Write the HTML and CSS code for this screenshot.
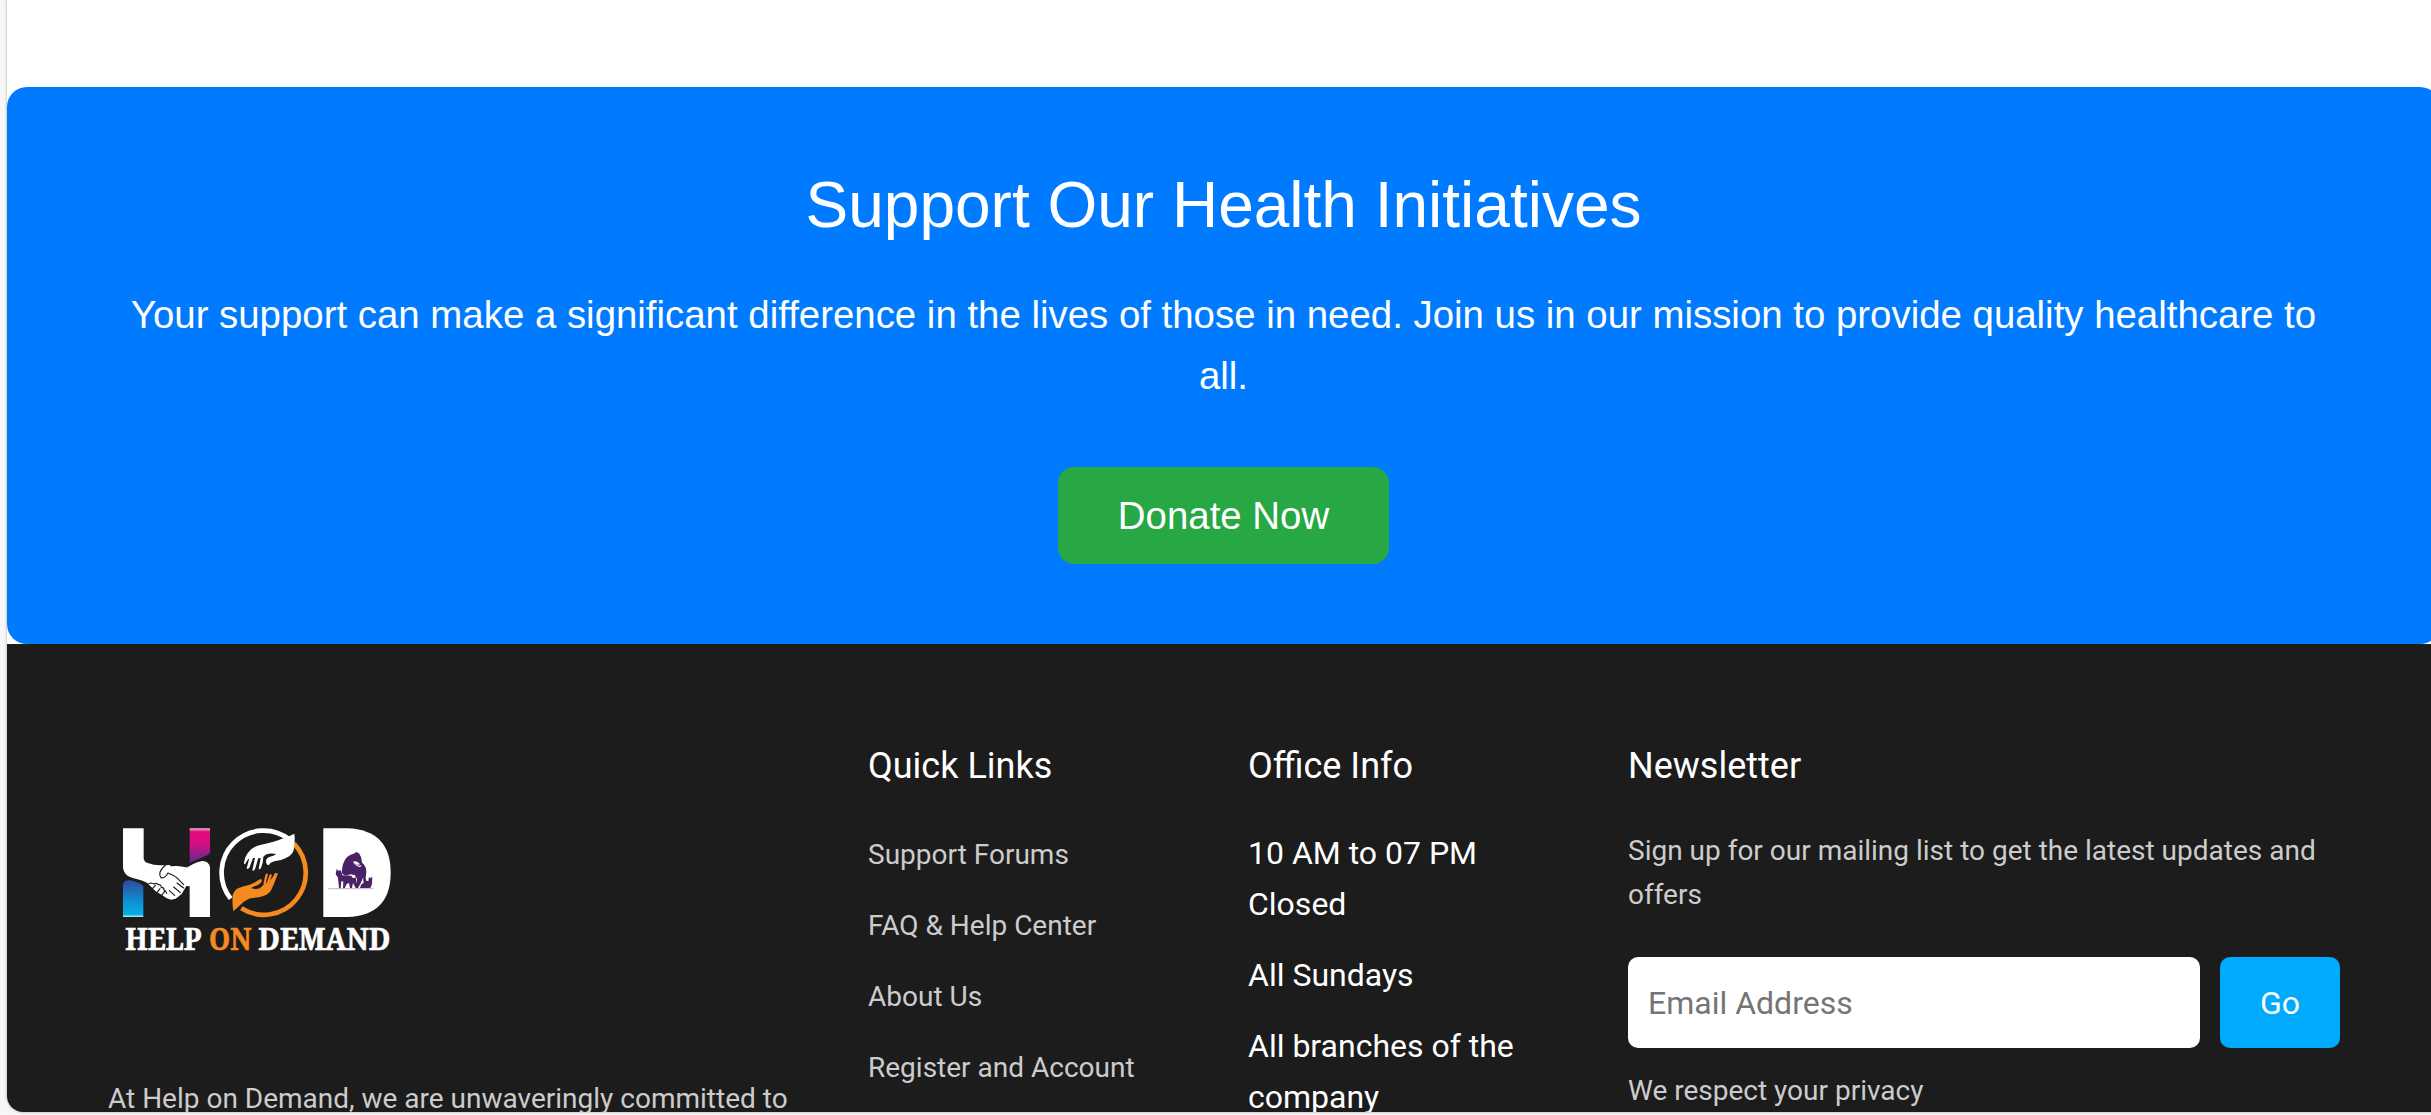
FILE: index.html
```html
<!DOCTYPE html>
<html lang="en">
<head>
<meta charset="utf-8">
<title>Help on Demand</title>
<link rel="stylesheet" href="styles.css">
</head>
<body>
<div class="page">
  <section class="cta">
    <h2 class="cta-title">Support Our Health Initiatives</h2>
    <p class="cta-text">Your support can make a significant difference in the lives of those in need. Join us in our mission to provide quality healthcare to all.</p>
    <a class="cta-button">Donate Now</a>
  </section>
  <footer class="footer">
    <div class="brand">
      <svg class="logo" viewBox="0 0 960 540" role="img" aria-label="Help on Demand">
        <defs>
          <linearGradient id="pink" x1="0" y1="0" x2="0" y2="1"><stop offset="0" stop-color="#f7b6d6"/><stop offset=".1" stop-color="#e5097f"/><stop offset=".45" stop-color="#d60f84"/><stop offset="1" stop-color="#5b2d8c"/></linearGradient>
          <linearGradient id="blue" x1="0" y1="0" x2="0" y2="1"><stop offset="0" stop-color="#2f4a9e"/><stop offset=".6" stop-color="#0e92d2"/><stop offset=".93" stop-color="#06aee6"/><stop offset="1" stop-color="#c5effb"/></linearGradient>
        </defs>
        <!-- H: two arms shaking hands -->
        <g transform="translate(60 72)">
          <path fill="url(#pink)" d="M209 13h61v70q-2 9-14 13l-47 20z"/>
          <path fill="url(#blue)" d="M9 180q4-12 20-11 16 1 41 16v94H9z"/>
          <path fill="#fff" d="M9 13h62v92q2 9 12 12 20 8 42 7l25-1 55 5q28-16 43-17 19 0 22 20v148h-61v-92l-10-1-14 24-18 14-14 3-14-5-12-8-20-12-26-26q-14-8-34-12Q9 158 9 126z"/>
          <path fill="none" stroke="#1c1c1c" stroke-width="3.5" stroke-linecap="round" stroke-linejoin="round" d="M72 181l8 4q2-6 12-8 8 1 10 3 8-5 13 2 8-1 9 8 8 0 8 8 6 2 8 10M92 200l14-16M106 212l14-18M120 220l14-18M137 123q-10 6-17 22-3 9 3 16 12 3 21-14 16 6 26 14l21 21M152 125q28-3 50 4M161 189l20 17M148 200l16 14M171 177l20 15"/>
        </g>
        <!-- O: ring with a giving and a receiving hand -->
        <path fill="none" stroke="#fff" stroke-width="14" d="M392 296A126 126 0 0 1 569 119"/>
        <path fill="none" stroke="#f58a1f" stroke-width="14" d="M582 131A126 126 0 0 1 424 325"/>
        <g transform="translate(348 72)">
          <path fill="#fff" d="M235 29q3 24-2 50-5 15-23 23-15 8-35 10-13 3-17 12-8-2-8-13 1-10 12-13 10-2 19-8-18-4-32 2l-7 6q0 15-6 31-4 10-8 5l6-31-7-1-9 31q-5 11-9 6l8-37-6 0-10 27q-5 9-9 4l8-30q-6 4-12 16-5 4-4-3 3-20 14-32 15-18 38-22 40-8 67-20 19-6 32-13z"/>
          <path fill="#f58a1f" d="M52 262q-4-25-2-48 5-18 20-23 12-5 29-8 16-5 32-17 9-2 6 6-5 11-22 15-7 3-9 6 22 5 31-5l8-9 13-4 20-25q8-7 7 1-10 28-19 46-7 13-24 19-14 5-34 6-18 4-32 18z"/>
          <path fill="none" stroke="#f58a1f" stroke-width="7" stroke-linecap="round" d="M146 178l6-26M154 183l10-29M164 183l15-32"/>
        </g>
        <!-- D: group of animals -->
        <path fill="#fff" d="M670 85h72q130 5 130 133T742 351h-72z"/>
        <g transform="translate(660 120)" fill="#4b2165">
          <path d="M66 100q-1-28 12-45 8-11 23-14l8-5 8 4q8 12 8 21l2 12-4 2-10-9q-8-4-14-1 6 9 17 9l11-5q12 10 12 26l-2 19 3 15-4 1-7-17-7 17-8 14h-5l2-27-7-12-14-2q-14 9-24-3z"/>
          <path d="M50 87l5 5 8-1 4 15 27 1 5 8 8-3 2 12 6 20h-8l-8-15-3 15h-6l-3-15-7 3-6 13h-5l1-20-6-2-2 22h-5l-3-32-7-10zM147 110l4 5 6-5-1 22-5 12h-31l3-10 8-6-2-12 10 6 6 2z"/>
          <path fill="#fff" d="M99 67q10 8 17 10l9-1-4 5q-11 0-22-14z"/>
        </g>
        <path stroke="#8b7199" stroke-width="1.5" d="M684 266h136"/>
        <text class="logo-text" x="76" y="451" textLength="228" lengthAdjust="spacingAndGlyphs">HELP</text>
        <text class="logo-text logo-accent" x="327" y="451" textLength="127" lengthAdjust="spacingAndGlyphs">ON</text>
        <text class="logo-text" x="475" y="451" textLength="396" lengthAdjust="spacingAndGlyphs">DEMAND</text>
      </svg>
      <p class="about">At Help on Demand, we are unwaveringly committed to</p>
    </div>
    <div class="column">
      <h3 class="heading">Quick Links</h3>
      <ul class="list links">
        <li><a>Support Forums</a></li>
        <li><a>FAQ &amp; Help Center</a></li>
        <li><a>About Us</a></li>
        <li><a>Register and Account</a></li>
      </ul>
    </div>
    <div class="column">
      <h3 class="heading">Office Info</h3>
      <ul class="list">
        <li>10 AM to 07 PM<br>Closed</li>
        <li>All Sundays</li>
        <li>All branches of the company</li>
      </ul>
    </div>
    <div class="column">
      <h3 class="heading">Newsletter</h3>
      <p class="note">Sign up for our mailing list to get the latest updates and offers</p>
      <form class="signup">
        <input class="email" type="email" placeholder="Email Address">
        <button class="go" type="button">Go</button>
      </form>
      <p class="note">We respect your privacy</p>
    </div>
  </footer>
</div>
</body>
</html>
```
FILE: styles.css
```css
* { box-sizing: border-box; }
html { overflow: hidden; }
body {
  margin: 0;
  height: 1115px;
  overflow: hidden;
  background: #f7f7f7;
  font-family: Roboto, sans-serif;
  font-size: 32px;
  line-height: 1.6;
}
.page {
  width: 2433px;
  height: 1112px;
  margin-left: 7px;
  padding-top: 87px;
  overflow: hidden;
  background: #fff;
  border-bottom-left-radius: 16px;
  box-shadow: 0 0 3px rgba(0, 0, 0, .35);
}
.cta {
  height: 557px;
  padding: 80px 120px;
  border-radius: 20px;
  background: #007bff;
  color: #fff;
  font-family: "Liberation Sans", Arial, sans-serif;
  font-size: 38.4px;
  text-align: center;
}
.cta-title { margin: 0 0 40px; font-size: 64px; font-weight: 400; line-height: 77px; }
.cta-text { margin: 0 0 60px; line-height: 61.4px; }
.cta-button {
  display: inline-block;
  padding: 18px 60px;
  border-radius: 16px;
  background: #28a745;
  line-height: 61px;
}
.footer {
  display: grid;
  grid-template-columns: 680px 300px 300px 712px;
  column-gap: 80px;
  height: 468px;
  padding: 97px 0 0 101px;
  background: #1c1c1c;
  color: #fff;
}
.brand { padding-top: 59px; }
.logo { display: block; width: 320px; height: 180px; margin-left: -8px; }
.logo-text { fill: #fff; stroke: #fff; stroke-width: 2; font: bold 94px "Noto Serif", "DejaVu Serif", serif; }
.logo-accent { fill: #f58a1f; stroke: #f58a1f; }
.about { margin: 97px 0 0; color: #ccc; font-size: 28px; line-height: 44.8px; white-space: nowrap; }
.heading { margin: 0 0 37px; font-size: 36px; font-weight: 400; line-height: 50px; }
.list { margin: 0; padding: 0; list-style: none; }
.list li { margin-bottom: 20px; line-height: 51px; }
.links a { display: block; padding-top: 2px; color: #ccc; font-size: 28px; line-height: 49px; }
.note { margin: 0; color: #ccc; font-size: 28px; line-height: 44px; }
.heading + .note { padding-top: 1px; }
.signup { display: flex; gap: 20px; margin: 40px 0 21px; }
.email, .go { height: 91px; border: 0; border-radius: 10px; font: 32px Roboto, sans-serif; }
.email { width: 572px; padding: 0 20px; background: #fff; }
.email::placeholder { color: #757575; }
.go { width: 120px; background: #00aaff; color: #fff; }
```
